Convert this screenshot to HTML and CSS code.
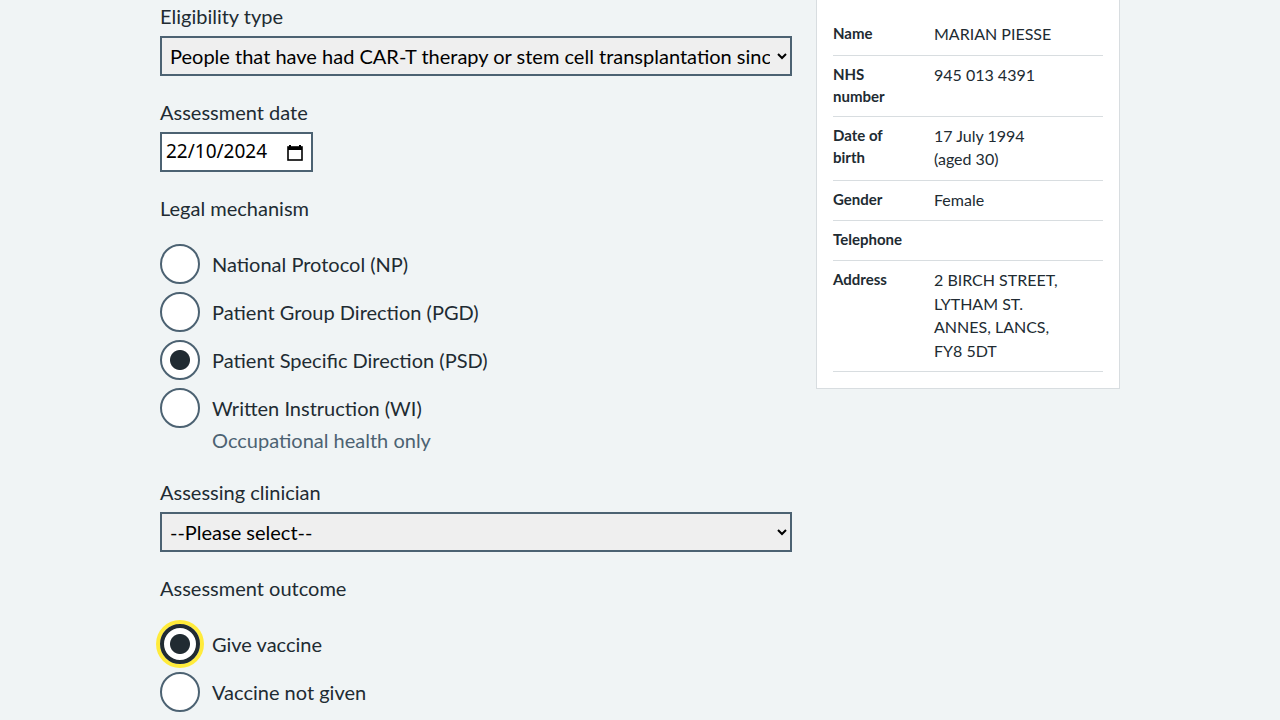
FILE: index.html
```html
<!DOCTYPE html>
<html lang="en">
<head>
<meta charset="utf-8">
<title>Vaccination assessment</title>
<link rel="stylesheet" href="styles.css">
</head>
<body>
<div class="page">
  <div class="layout">
    <main class="form-col">
      <div class="form-group">
        <label class="label" for="elig">Eligibility type</label>
        <select class="select" id="elig">
          <option>People that have had CAR-T therapy or stem cell transplantation since their last COVID-19 vaccination</option>
        </select>
      </div>

      <div class="form-group">
        <label class="label" for="adate">Assessment date</label>
        <div class="date-input">
          <input class="date-field" id="adate" type="text" value="22/10/2024">
          <svg class="cal-icon" width="16" height="17" viewBox="0 0 16 17" aria-hidden="true">
            <path d="M3 1v3M13 1v3" stroke="#000" stroke-width="2"/>
            <rect x="1" y="3" width="14" height="13" fill="none" stroke="#000" stroke-width="1.6"/>
            <rect x="1" y="3" width="14" height="3" fill="#000"/>
          </svg>
        </div>
      </div>

      <fieldset class="fieldset form-group">
        <legend class="legend">Legal mechanism</legend>
        <div class="radios">
          <div class="radio">
            <input class="radio-input" type="radio" name="legal" id="np">
            <label class="radio-label" for="np">National Protocol (NP)</label>
          </div>
          <div class="radio">
            <input class="radio-input" type="radio" name="legal" id="pgd">
            <label class="radio-label" for="pgd">Patient Group Direction (PGD)</label>
          </div>
          <div class="radio">
            <input class="radio-input" type="radio" name="legal" id="psd" checked>
            <label class="radio-label" for="psd">Patient Specific Direction (PSD)</label>
          </div>
          <div class="radio">
            <input class="radio-input" type="radio" name="legal" id="wi">
            <div class="radio-text">
              <label class="radio-label" for="wi">Written Instruction (WI)</label>
              <div class="hint">Occupational health only</div>
            </div>
          </div>
        </div>
      </fieldset>

      <div class="form-group">
        <label class="label" for="clin">Assessing clinician</label>
        <select class="select" id="clin">
          <option>--Please select--</option>
        </select>
      </div>

      <fieldset class="fieldset form-group">
        <legend class="legend">Assessment outcome</legend>
        <div class="radios">
          <div class="radio">
            <input class="radio-input is-focused" type="radio" name="outcome" id="give" checked>
            <label class="radio-label" for="give">Give vaccine</label>
          </div>
          <div class="radio">
            <input class="radio-input" type="radio" name="outcome" id="notgiven">
            <label class="radio-label" for="notgiven">Vaccine not given</label>
          </div>
        </div>
      </fieldset>
    </main>

    <aside class="side-col">
      <div class="card">
        <dl class="summary">
          <div class="row"><dt>Name</dt><dd>MARIAN PIESSE</dd></div>
          <div class="row"><dt>NHS number</dt><dd>945 013 4391</dd></div>
          <div class="row"><dt>Date of birth</dt><dd>17 July 1994 (aged 30)</dd></div>
          <div class="row"><dt>Gender</dt><dd>Female</dd></div>
          <div class="row"><dt>Telephone</dt><dd></dd></div>
          <div class="row"><dt>Address</dt><dd>2 BIRCH STREET, LYTHAM ST. ANNES, LANCS, FY8 5DT</dd></div>
        </dl>
      </div>
    </aside>
  </div>
</div>
</body>
</html>
```

FILE: styles.css
```css
* { box-sizing: border-box; }

html, body {
  margin: 0;
  padding: 0;
  background: #f0f4f5;
  color: #212b32;
  font-family: Lato, "Noto Sans", "Liberation Sans", sans-serif;
}

.page {
  width: 960px;
  margin: -2px auto 0;
}

.layout {
  display: grid;
  grid-template-columns: 632px 304px;
  column-gap: 24px;
  align-items: start;
}

.form-col {
  padding-top: 4px;
}

.form-group {
  margin: 0 0 22px;
}

.label,
.legend {
  display: block;
  font-size: 20px;
  line-height: 28px;
  margin-bottom: 6px;
}

.fieldset {
  border: 0;
  padding: 0;
  min-width: 0;
}

.legend {
  padding: 0;
  margin-bottom: 22px;
}

.select {
  display: block;
  width: 632px;
  height: 40px;
  border: 2px solid #4c6272;
  border-radius: 0;
  background-color: #efefef;
  color: #000;
  font-family: Lato, "Noto Sans", sans-serif;
  font-size: 20px;
  padding: 0 4px 0 4px;
  margin: 0;
}

.date-input {
  display: flex;
  align-items: center;
  width: 153px;
  height: 40px;
  border: 2px solid #4c6272;
  background: #fff;
  padding: 0 8px 0 4px;
}

.date-field {
  flex: 1;
  min-width: 0;
  border: 0;
  padding: 0;
  margin: 0 0 3px;
  font-family: "Noto Sans", "DejaVu Sans", sans-serif;
  font-size: 19px;
  color: #000;
  background: transparent;
  outline: none;
}

.cal-icon {
  flex: none;
  display: block;
}

.radios {
  display: flex;
  flex-direction: column;
  gap: 8px;
  padding-bottom: 2px;
}

.radio {
  display: flex;
  align-items: flex-start;
  gap: 12px;
}

.radio-input {
  -webkit-appearance: none;
  appearance: none;
  flex: none;
  width: 40px;
  height: 40px;
  margin: 0;
  border: 2px solid #4c6272;
  border-radius: 50%;
  background: #fff;
}

.radio-input:checked {
  background: radial-gradient(circle, #212b32 0, #212b32 9.5px, #fff 10.5px);
}

.radio-input.is-focused {
  border: 4px solid #212b32;
  box-shadow: 0 0 0 4px #ffeb3b;
}

.radio-label {
  display: block;
  font-size: 20px;
  line-height: 28px;
  padding-top: 6px;
}

.radio-text {
  display: flex;
  flex-direction: column;
}

.hint {
  font-size: 20px;
  line-height: 28px;
  color: #4c6272;
  margin-top: 4px;
}

.side-col {
  margin-top: 0;
}

.card {
  background: #fff;
  border: 1px solid #d8dde0;
  padding: 16px;
}

.summary {
  margin: 0;
}

.row {
  display: grid;
  grid-template-columns: 101px 126px;
  border-bottom: 1px solid #d8dde0;
  padding: 7px 0 9px;
  min-height: 40px;
}

.row dt {
  font-weight: 700;
  font-size: 15px;
  line-height: 22px;
  padding-right: 24px;
}

.row dd {
  margin: 0;
  font-size: 16px;
  line-height: 23.5px;
}
```
